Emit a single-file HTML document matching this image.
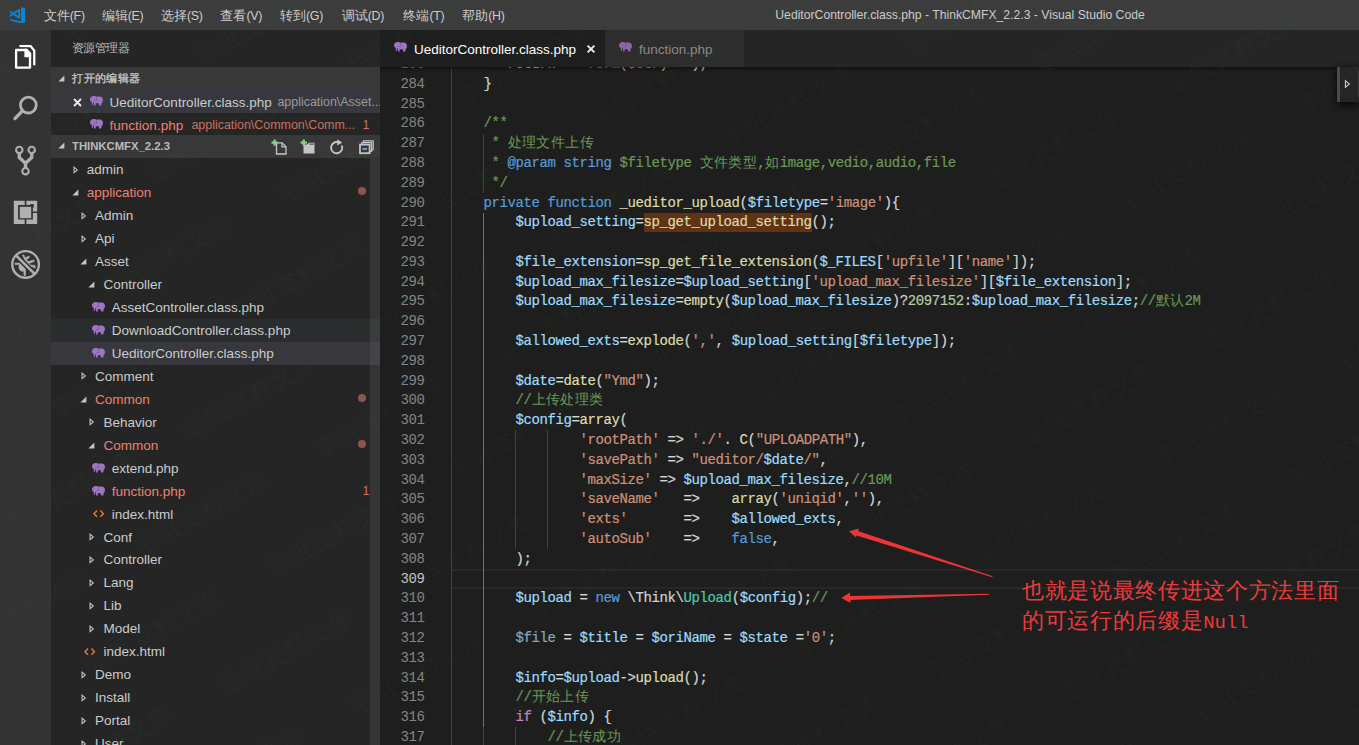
<!DOCTYPE html>
<html><head><meta charset="utf-8"><style>
*{margin:0;padding:0;box-sizing:border-box}
html,body{width:1359px;height:745px;overflow:hidden;background:#1e1e1e}
body{position:relative;font-family:"Liberation Sans",sans-serif}
div,svg{position:absolute}
#title{left:0;top:0;width:1359px;height:30px;background:#3c3c3c}
.menu{top:7.5px;height:17px;line-height:17px;font-size:12.5px;color:#cccccc;white-space:nowrap}
.mp{font-size:12.4px;letter-spacing:-0.3px}
.cj{display:inline-block;text-align:left;overflow:visible;white-space:nowrap}
.cjc{display:inline-block;text-align:left;white-space:nowrap;-webkit-text-stroke:0;font-weight:300;font-size:14.2px}
.cja{display:inline-block;text-align:left;white-space:nowrap}
#wtitle{left:775.3px;top:7px;height:17px;line-height:17px;font-size:12.2px;color:#cccccc;white-space:nowrap}
#act{left:0;top:30px;width:51px;height:715px;background:#333333}
#side{left:51px;top:30px;width:329px;height:715px;background:#252526}
.sbtitle{height:16px;line-height:16px;font-size:11.5px;color:#bbbbbb;white-space:nowrap}
.sechdr{left:51px;width:329px;background:#383838}
.sectxt{height:17px;line-height:17px;font-size:11.4px;font-weight:bold;color:#bbbbbb;white-space:nowrap}
.row{left:51px;width:329px}
.lbl{height:23px;line-height:23px;font-size:13.5px;white-space:nowrap}
.desc{height:23px;line-height:23px;font-size:12.45px;color:#9a9a9a;white-space:nowrap;overflow:hidden}
.dot{left:357.8px;width:8.4px;height:8.4px;border-radius:50%;background:#8c554d}
#sscroll{left:370px;top:158px;width:10px;height:587px;background:rgba(121,121,121,0.2)}
#tabs{left:380px;top:30px;width:979px;height:37px;background:#252526}
.tab{top:30px;height:37px}
.tabtxt{top:39.7px;height:20px;line-height:20px;font-size:13.5px;white-space:nowrap}
#editor{left:380px;top:67px;width:979px;height:678px;background:#1e1e1e;overflow:hidden}
.ln{left:0;width:44.4px;text-align:right;height:19.79px;line-height:19.79px;font-family:"Liberation Mono",monospace;font-size:14px;letter-spacing:-0.4px}
.cl{left:71.5px;height:19.79px;line-height:19.79px;font-family:"Liberation Mono",monospace;font-size:14px;letter-spacing:-0.4px;white-space:pre;-webkit-text-stroke:0.2px currentColor}
.guide{width:1px}
.curline{left:72px;width:907px;height:19.79px;border-top:2px solid #282828;border-bottom:2px solid #282828}
.anno{left:1022px;margin-top:-2px;font-weight:300;height:30px;line-height:30px;font-family:"Liberation Serif",serif;font-size:21.5px;color:#ee3a3a;white-space:nowrap}
</style></head><body>
<div id="title"></div>
<svg style="position:absolute;left:4px;top:2px" width="28" height="26" viewBox="0 0 28 26">
<path d="M17 4.9 L21.2 6.4 V20.6 L17.2 21.2 Z" fill="#0a84d6"/>
<path d="M5.6 16.9 Q9 17.1 17.3 19.3 L17.3 21.2 Q9.5 19.8 5.6 17.9 Z" fill="#0a84d6"/>
<path d="M15.2 8 V15.6 L8.9 11.8 Z" fill="none" stroke="#0a84d6" stroke-width="1.9" stroke-linejoin="round"/>
<path d="M8.9 11.8 L6.4 9.6 M8.9 11.8 L6.4 13.9" stroke="#0a84d6" stroke-width="1.8" stroke-linecap="round"/>
</svg>
<div class="menu" style="left:43.8px"><span class="cj" style="width:13px">文</span><span class="cj" style="width:13px">件</span><span class="mp">(F)</span></div>
<div class="menu" style="left:101.7px"><span class="cj" style="width:13px">编</span><span class="cj" style="width:13px">辑</span><span class="mp">(E)</span></div>
<div class="menu" style="left:161px"><span class="cj" style="width:13px">选</span><span class="cj" style="width:13px">择</span><span class="mp">(S)</span></div>
<div class="menu" style="left:220.4px"><span class="cj" style="width:13px">查</span><span class="cj" style="width:13px">看</span><span class="mp">(V)</span></div>
<div class="menu" style="left:280px"><span class="cj" style="width:13px">转</span><span class="cj" style="width:13px">到</span><span class="mp">(G)</span></div>
<div class="menu" style="left:341.7px"><span class="cj" style="width:13px">调</span><span class="cj" style="width:13px">试</span><span class="mp">(D)</span></div>
<div class="menu" style="left:403.4px"><span class="cj" style="width:13px">终</span><span class="cj" style="width:13px">端</span><span class="mp">(T)</span></div>
<div class="menu" style="left:462.2px"><span class="cj" style="width:13px">帮</span><span class="cj" style="width:13px">助</span><span class="mp">(H)</span></div>
<div id="wtitle">UeditorController.class.php - ThinkCMFX_2.2.3 - Visual Studio Code</div>
<div id="act"></div>
<svg style="position:absolute;left:10px;top:40px" width="30" height="32" viewBox="0 0 30 32">
<path d="M10.3 6 H20.6 L24.25 10.6 V24.4" fill="none" stroke="#fff" stroke-width="2.25" stroke-linecap="round" stroke-linejoin="miter"/>
<path d="M6.1 10 H16.6 L20 14 V27.7 H6.1 Z" fill="#333333" stroke="#333333" stroke-width="5"/>
<path d="M6.1 10 H16.6 L20 14 V27.7 H6.1 Z" fill="none" stroke="#fff" stroke-width="2.3" stroke-linejoin="round"/>
<path d="M14.4 8.85 H17 L21.15 13 V17.2 H14.4 Z" fill="#fff"/>
</svg>
<svg style="position:absolute;left:8px;top:90px" width="36" height="36" viewBox="0 0 36 36" fill="none" stroke="#b0b0b0" stroke-linecap="round">
<circle cx="20.35" cy="15.1" r="7.9" stroke-width="2.8"/>
<path d="M14.4 21 L6.9 28.6" stroke-width="3.3"/>
</svg>
<svg style="position:absolute;left:8px;top:140px" width="36" height="40" viewBox="0 0 36 40" fill="none" stroke="#b0b0b0">
<circle cx="11.3" cy="9.9" r="3.2" stroke-width="2.1"/><circle cx="23.7" cy="9.9" r="3.2" stroke-width="2.1"/><circle cx="17.5" cy="31.2" r="3.2" stroke-width="2.1"/>
<path d="M11.3 13 V17.6 L17.5 23.2 V28.2 M23.7 13 V17.6 L17.5 23.2" stroke-width="3.4" stroke-linejoin="miter"/>
</svg>
<svg style="position:absolute;left:8px;top:194px" width="36" height="36" viewBox="0 0 36 36" fill="#b0b0b0">
<path d="M5.8 6.8 H16.7 V11.1 H10.1 V25.6 H16.7 V30 H5.8 Z"/>
<path d="M18.4 6.8 H29.2 V17.6 H24.9 V11.1 H18.4 Z"/>
<path d="M18.4 19.1 H29.2 V30 H18.4 V25.6 H24.9 V19.1 Z"/>
<rect x="22.2" y="10.1" width="3.6" height="3.4" fill="#333333"/>
<rect x="11.8" y="12.8" width="11.4" height="11.4"/>
</svg>
<svg style="position:absolute;left:6px;top:244px" width="40" height="40" viewBox="0 0 40 40">
<g fill="#b0b0b0" stroke="#b0b0b0">
<path d="M16.5 11 L18 11 L19 14 L23 12 L23.5 13.2 L20.5 16 L22 17.5 L28 16 L28.3 17.3 L23 19.5 L24 21 L29 21.5 L29.2 24 L27.8 24 L27.6 22.8 L22 23 Z" stroke-width="0.6"/>
<path d="M9 19 L14 19 L15.5 17.5 L21 24 L19.5 25.5 L19.5 31.5 L18 31.5 L17.8 27.2 Q14 28 13 24 Q12.6 21.5 13.6 20.6 L9 20.6 Z" stroke-width="0.6"/>
</g>
<path d="M10.2 11.6 L28.6 29.9" stroke="#333333" stroke-width="5.6"/>
<path d="M10.2 11.6 L28.6 29.9" stroke="#b0b0b0" stroke-width="2.6"/>
<circle cx="19.6" cy="20.4" r="13.3" fill="none" stroke="#b0b0b0" stroke-width="2.4"/>
</svg>
<div id="side"></div>
<div class="sbtitle" style="left:71.6px;top:40px"><span class="cj" style="width:11.5px">资</span><span class="cj" style="width:11.5px">源</span><span class="cj" style="width:11.5px">管</span><span class="cj" style="width:11.5px">理</span><span class="cj" style="width:11.5px">器</span></div>
<div class="sechdr" style="top:67px;height:23px"></div>
<svg style="position:absolute;left:58.3px;top:74.6px" width="7" height="7" viewBox="0 0 7 7"><path d="M6.4 0.4 L6.4 6.4 L0.4 6.4 Z" fill="#c5c5c5"/></svg>
<div class="sectxt" style="left:72.3px;top:70px"><span class="cj" style="width:11.4px">打</span><span class="cj" style="width:11.4px">开</span><span class="cj" style="width:11.4px">的</span><span class="cj" style="width:11.4px">编</span><span class="cj" style="width:11.4px">辑</span><span class="cj" style="width:11.4px">器</span></div>
<div class="row" style="top:90px;height:23px;background:#37373d"></div>
<svg style="position:absolute;left:73px;top:97.5px" width="9" height="9" viewBox="0 0 9 9"><path d="M1 1 L8 8 M8 1 L1 8" stroke="#e8e8e8" stroke-width="1.9"/></svg>
<svg style="position:absolute;left:90px;top:96px" width="14" height="10" viewBox="0 0 14 10"><path d="M0 3.5 C0 1.3 1.5 0 3.6 0 C5 0 6 0.3 6.5 0.8 C7.2 0.6 8.2 0.5 9.5 0.5 C11.8 0.7 13 2 13 4 C13 5.3 12.5 6.3 11.8 6.8 L11.2 9.6 L9 9.6 L8.8 7.2 L5.8 7.2 L5.6 9.5 L4 9.5 L4 6.5 L3.3 6.3 L3 8.8 L1.8 8.8 L1.8 6 C0.6 5.4 0 4.6 0 3.5 Z" fill="#a074c4"/><path d="M6.6 1.4 V4.6 H4" fill="none" stroke="#6a4f88" stroke-width="0.55"/></svg>
<div class="lbl" style="left:109.6px;top:90.7px;color:#cccccc">UeditorController.class.php</div>
<div class="desc" style="left:277.4px;top:90.7px;width:103px">application\Asset...</div>
<svg style="position:absolute;left:90px;top:119px" width="14" height="10" viewBox="0 0 14 10"><path d="M0 3.5 C0 1.3 1.5 0 3.6 0 C5 0 6 0.3 6.5 0.8 C7.2 0.6 8.2 0.5 9.5 0.5 C11.8 0.7 13 2 13 4 C13 5.3 12.5 6.3 11.8 6.8 L11.2 9.6 L9 9.6 L8.8 7.2 L5.8 7.2 L5.6 9.5 L4 9.5 L4 6.5 L3.3 6.3 L3 8.8 L1.8 8.8 L1.8 6 C0.6 5.4 0 4.6 0 3.5 Z" fill="#a074c4"/><path d="M6.6 1.4 V4.6 H4" fill="none" stroke="#6a4f88" stroke-width="0.55"/></svg>
<div class="lbl" style="left:109.6px;top:113.7px;color:#f0806f">function.php</div>
<div class="desc" style="left:191.4px;top:113.7px;color:#c8705f">application\Common\Comm...</div>
<div class="lbl" style="left:362.6px;top:114px;color:#c87565;font-size:12.5px">1</div>
<div class="sechdr" style="top:135px;height:23px"></div>
<svg style="position:absolute;left:58.3px;top:142.2px" width="7" height="7" viewBox="0 0 7 7"><path d="M6.4 0.4 L6.4 6.4 L0.4 6.4 Z" fill="#c5c5c5"/></svg>
<div class="sectxt" style="left:72px;top:138px;font-size:11.3px">THINKCMFX_2.2.3</div>
<svg style="position:absolute;left:270px;top:138px" width="20" height="18" viewBox="0 0 20 18">
<path d="M6.5 4.8 H12 L16 8.8 V16 H6.5 Z" fill="none" stroke="#c5c5c5" stroke-width="1.3"/>
<path d="M12 4.8 V8.8 H16" fill="none" stroke="#c5c5c5" stroke-width="1.3"/>
<path d="M4.6 1.5 V7.8 M1.5 4.6 H7.8" stroke="#89d185" stroke-width="2.3"/>
</svg>
<svg style="position:absolute;left:299px;top:138px" width="20" height="18" viewBox="0 0 20 18">
<path d="M4.5 6.5 H8 L10 4.8 H15.5 V15.5 H4.5 Z" fill="#c5c5c5"/>
<path d="M10.5 5.6 H14.8 V6.6 H10.5 Z" fill="#383838"/>
<path d="M4.8 1.5 V7.8 M1.6 4.6 H8" stroke="#89d185" stroke-width="2.3"/>
</svg>
<svg style="position:absolute;left:329px;top:138px" width="17" height="18" viewBox="0 0 17 18">
<path d="M12.8 7.5 A5.6 5.6 0 1 1 9.2 4.3" fill="none" stroke="#c5c5c5" stroke-width="1.9"/>
<path d="M8.2 1.2 L13.2 4.4 L8.4 7.6 Z" fill="#c5c5c5"/>
</svg>
<svg style="position:absolute;left:358px;top:138px" width="17" height="18" viewBox="0 0 17 18">
<path d="M5.5 5.2 V2.8 H15.2 V11.6 H13" fill="none" stroke="#c5c5c5" stroke-width="1.2"/>
<path d="M3.8 6.6 V4.6 H13.6 V13.3 H11.6" fill="none" stroke="#c5c5c5" stroke-width="1.2"/>
<rect x="2" y="6.6" width="9.6" height="8.6" fill="none" stroke="#c5c5c5" stroke-width="1.8"/>
<rect x="4.6" y="10.2" width="4.4" height="1.5" fill="#75beff"/>
</svg>
<svg style="position:absolute;left:72.5px;top:165.9px" width="6" height="8" viewBox="0 0 6 8"><path d="M1.1 1.2 L4.3 3.9 L1.1 6.6 Z" fill="none" stroke="#c5c5c5" stroke-width="1.1" stroke-linejoin="miter"/></svg>
<div class="lbl" style="left:86.70px;top:158.30px;color:#cccccc">admin</div>
<svg style="position:absolute;left:71.5px;top:189.35px" width="7" height="7" viewBox="0 0 7 7"><path d="M6.4 0.4 L6.4 6.4 L0.4 6.4 Z" fill="#c5c5c5"/></svg>
<div class="lbl" style="left:86.70px;top:181.25px;color:#f0806f">application</div>
<div class="dot" style="top:187.05px"></div>
<svg style="position:absolute;left:80.87px;top:211.8px" width="6" height="8" viewBox="0 0 6 8"><path d="M1.1 1.2 L4.3 3.9 L1.1 6.6 Z" fill="none" stroke="#c5c5c5" stroke-width="1.1" stroke-linejoin="miter"/></svg>
<div class="lbl" style="left:95.07px;top:204.20px;color:#cccccc">Admin</div>
<svg style="position:absolute;left:80.87px;top:234.75px" width="6" height="8" viewBox="0 0 6 8"><path d="M1.1 1.2 L4.3 3.9 L1.1 6.6 Z" fill="none" stroke="#c5c5c5" stroke-width="1.1" stroke-linejoin="miter"/></svg>
<div class="lbl" style="left:95.07px;top:227.15px;color:#cccccc">Api</div>
<svg style="position:absolute;left:79.87px;top:258.2px" width="7" height="7" viewBox="0 0 7 7"><path d="M6.4 0.4 L6.4 6.4 L0.4 6.4 Z" fill="#c5c5c5"/></svg>
<div class="lbl" style="left:95.07px;top:250.10px;color:#cccccc">Asset</div>
<svg style="position:absolute;left:88.24px;top:281.15000000000003px" width="7" height="7" viewBox="0 0 7 7"><path d="M6.4 0.4 L6.4 6.4 L0.4 6.4 Z" fill="#c5c5c5"/></svg>
<div class="lbl" style="left:103.44px;top:273.05px;color:#cccccc">Controller</div>
<svg style="position:absolute;left:92.01px;top:301.9px" width="14" height="10" viewBox="0 0 14 10"><path d="M0 3.5 C0 1.3 1.5 0 3.6 0 C5 0 6 0.3 6.5 0.8 C7.2 0.6 8.2 0.5 9.5 0.5 C11.8 0.7 13 2 13 4 C13 5.3 12.5 6.3 11.8 6.8 L11.2 9.6 L9 9.6 L8.8 7.2 L5.8 7.2 L5.6 9.5 L4 9.5 L4 6.5 L3.3 6.3 L3 8.8 L1.8 8.8 L1.8 6 C0.6 5.4 0 4.6 0 3.5 Z" fill="#a074c4"/><path d="M6.6 1.4 V4.6 H4" fill="none" stroke="#6a4f88" stroke-width="0.55"/></svg>
<div class="lbl" style="left:111.81px;top:296.00px;color:#cccccc">AssetController.class.php</div>
<div class="row" style="top:318.75px;height:22.95px;background:#2a2d2e"></div>
<svg style="position:absolute;left:92.01px;top:324.85px" width="14" height="10" viewBox="0 0 14 10"><path d="M0 3.5 C0 1.3 1.5 0 3.6 0 C5 0 6 0.3 6.5 0.8 C7.2 0.6 8.2 0.5 9.5 0.5 C11.8 0.7 13 2 13 4 C13 5.3 12.5 6.3 11.8 6.8 L11.2 9.6 L9 9.6 L8.8 7.2 L5.8 7.2 L5.6 9.5 L4 9.5 L4 6.5 L3.3 6.3 L3 8.8 L1.8 8.8 L1.8 6 C0.6 5.4 0 4.6 0 3.5 Z" fill="#a074c4"/><path d="M6.6 1.4 V4.6 H4" fill="none" stroke="#6a4f88" stroke-width="0.55"/></svg>
<div class="lbl" style="left:111.81px;top:318.95px;color:#cccccc">DownloadController.class.php</div>
<div class="row" style="top:341.70px;height:22.95px;background:#37373d"></div>
<svg style="position:absolute;left:92.01px;top:347.8px" width="14" height="10" viewBox="0 0 14 10"><path d="M0 3.5 C0 1.3 1.5 0 3.6 0 C5 0 6 0.3 6.5 0.8 C7.2 0.6 8.2 0.5 9.5 0.5 C11.8 0.7 13 2 13 4 C13 5.3 12.5 6.3 11.8 6.8 L11.2 9.6 L9 9.6 L8.8 7.2 L5.8 7.2 L5.6 9.5 L4 9.5 L4 6.5 L3.3 6.3 L3 8.8 L1.8 8.8 L1.8 6 C0.6 5.4 0 4.6 0 3.5 Z" fill="#a074c4"/><path d="M6.6 1.4 V4.6 H4" fill="none" stroke="#6a4f88" stroke-width="0.55"/></svg>
<div class="lbl" style="left:111.81px;top:341.90px;color:#cccccc">UeditorController.class.php</div>
<svg style="position:absolute;left:80.87px;top:372.45px" width="6" height="8" viewBox="0 0 6 8"><path d="M1.1 1.2 L4.3 3.9 L1.1 6.6 Z" fill="none" stroke="#c5c5c5" stroke-width="1.1" stroke-linejoin="miter"/></svg>
<div class="lbl" style="left:95.07px;top:364.85px;color:#cccccc">Comment</div>
<svg style="position:absolute;left:79.87px;top:395.90000000000003px" width="7" height="7" viewBox="0 0 7 7"><path d="M6.4 0.4 L6.4 6.4 L0.4 6.4 Z" fill="#c5c5c5"/></svg>
<div class="lbl" style="left:95.07px;top:387.80px;color:#f0806f">Common</div>
<div class="dot" style="top:393.60px"></div>
<svg style="position:absolute;left:89.24px;top:418.34999999999997px" width="6" height="8" viewBox="0 0 6 8"><path d="M1.1 1.2 L4.3 3.9 L1.1 6.6 Z" fill="none" stroke="#c5c5c5" stroke-width="1.1" stroke-linejoin="miter"/></svg>
<div class="lbl" style="left:103.44px;top:410.75px;color:#cccccc">Behavior</div>
<svg style="position:absolute;left:88.24px;top:441.8px" width="7" height="7" viewBox="0 0 7 7"><path d="M6.4 0.4 L6.4 6.4 L0.4 6.4 Z" fill="#c5c5c5"/></svg>
<div class="lbl" style="left:103.44px;top:433.70px;color:#f0806f">Common</div>
<div class="dot" style="top:439.50px"></div>
<svg style="position:absolute;left:92.01px;top:462.54999999999995px" width="14" height="10" viewBox="0 0 14 10"><path d="M0 3.5 C0 1.3 1.5 0 3.6 0 C5 0 6 0.3 6.5 0.8 C7.2 0.6 8.2 0.5 9.5 0.5 C11.8 0.7 13 2 13 4 C13 5.3 12.5 6.3 11.8 6.8 L11.2 9.6 L9 9.6 L8.8 7.2 L5.8 7.2 L5.6 9.5 L4 9.5 L4 6.5 L3.3 6.3 L3 8.8 L1.8 8.8 L1.8 6 C0.6 5.4 0 4.6 0 3.5 Z" fill="#a074c4"/><path d="M6.6 1.4 V4.6 H4" fill="none" stroke="#6a4f88" stroke-width="0.55"/></svg>
<div class="lbl" style="left:111.81px;top:456.65px;color:#cccccc">extend.php</div>
<svg style="position:absolute;left:92.01px;top:485.5px" width="14" height="10" viewBox="0 0 14 10"><path d="M0 3.5 C0 1.3 1.5 0 3.6 0 C5 0 6 0.3 6.5 0.8 C7.2 0.6 8.2 0.5 9.5 0.5 C11.8 0.7 13 2 13 4 C13 5.3 12.5 6.3 11.8 6.8 L11.2 9.6 L9 9.6 L8.8 7.2 L5.8 7.2 L5.6 9.5 L4 9.5 L4 6.5 L3.3 6.3 L3 8.8 L1.8 8.8 L1.8 6 C0.6 5.4 0 4.6 0 3.5 Z" fill="#a074c4"/><path d="M6.6 1.4 V4.6 H4" fill="none" stroke="#6a4f88" stroke-width="0.55"/></svg>
<div class="lbl" style="left:111.81px;top:479.60px;color:#f0806f">function.php</div>
<div class="lbl" style="left:362.6px;top:480.40px;color:#c87565;font-size:12.5px">1</div>
<svg style="position:absolute;left:92.81px;top:510.15000000000003px" width="12" height="8" viewBox="0 0 12 8" fill="none" stroke="#e37933" stroke-width="1.45"><path d="M4 0.6 L1 3.7 L4 6.8 M7.4 0.6 L10.4 3.7 L7.4 6.8"/></svg>
<div class="lbl" style="left:111.81px;top:502.55px;color:#cccccc">index.html</div>
<svg style="position:absolute;left:89.24px;top:533.0999999999999px" width="6" height="8" viewBox="0 0 6 8"><path d="M1.1 1.2 L4.3 3.9 L1.1 6.6 Z" fill="none" stroke="#c5c5c5" stroke-width="1.1" stroke-linejoin="miter"/></svg>
<div class="lbl" style="left:103.44px;top:525.50px;color:#cccccc">Conf</div>
<svg style="position:absolute;left:89.24px;top:556.05px" width="6" height="8" viewBox="0 0 6 8"><path d="M1.1 1.2 L4.3 3.9 L1.1 6.6 Z" fill="none" stroke="#c5c5c5" stroke-width="1.1" stroke-linejoin="miter"/></svg>
<div class="lbl" style="left:103.44px;top:548.45px;color:#cccccc">Controller</div>
<svg style="position:absolute;left:89.24px;top:578.9999999999999px" width="6" height="8" viewBox="0 0 6 8"><path d="M1.1 1.2 L4.3 3.9 L1.1 6.6 Z" fill="none" stroke="#c5c5c5" stroke-width="1.1" stroke-linejoin="miter"/></svg>
<div class="lbl" style="left:103.44px;top:571.40px;color:#cccccc">Lang</div>
<svg style="position:absolute;left:89.24px;top:601.9499999999999px" width="6" height="8" viewBox="0 0 6 8"><path d="M1.1 1.2 L4.3 3.9 L1.1 6.6 Z" fill="none" stroke="#c5c5c5" stroke-width="1.1" stroke-linejoin="miter"/></svg>
<div class="lbl" style="left:103.44px;top:594.35px;color:#cccccc">Lib</div>
<svg style="position:absolute;left:89.24px;top:624.9px" width="6" height="8" viewBox="0 0 6 8"><path d="M1.1 1.2 L4.3 3.9 L1.1 6.6 Z" fill="none" stroke="#c5c5c5" stroke-width="1.1" stroke-linejoin="miter"/></svg>
<div class="lbl" style="left:103.44px;top:617.30px;color:#cccccc">Model</div>
<svg style="position:absolute;left:84.44px;top:647.8499999999999px" width="12" height="8" viewBox="0 0 12 8" fill="none" stroke="#e37933" stroke-width="1.45"><path d="M4 0.6 L1 3.7 L4 6.8 M7.4 0.6 L10.4 3.7 L7.4 6.8"/></svg>
<div class="lbl" style="left:103.44px;top:640.25px;color:#cccccc">index.html</div>
<svg style="position:absolute;left:80.87px;top:670.8px" width="6" height="8" viewBox="0 0 6 8"><path d="M1.1 1.2 L4.3 3.9 L1.1 6.6 Z" fill="none" stroke="#c5c5c5" stroke-width="1.1" stroke-linejoin="miter"/></svg>
<div class="lbl" style="left:95.07px;top:663.20px;color:#cccccc">Demo</div>
<svg style="position:absolute;left:80.87px;top:693.75px" width="6" height="8" viewBox="0 0 6 8"><path d="M1.1 1.2 L4.3 3.9 L1.1 6.6 Z" fill="none" stroke="#c5c5c5" stroke-width="1.1" stroke-linejoin="miter"/></svg>
<div class="lbl" style="left:95.07px;top:686.15px;color:#cccccc">Install</div>
<svg style="position:absolute;left:80.87px;top:716.6999999999999px" width="6" height="8" viewBox="0 0 6 8"><path d="M1.1 1.2 L4.3 3.9 L1.1 6.6 Z" fill="none" stroke="#c5c5c5" stroke-width="1.1" stroke-linejoin="miter"/></svg>
<div class="lbl" style="left:95.07px;top:709.10px;color:#cccccc">Portal</div>
<svg style="position:absolute;left:80.87px;top:739.65px" width="6" height="8" viewBox="0 0 6 8"><path d="M1.1 1.2 L4.3 3.9 L1.1 6.6 Z" fill="none" stroke="#c5c5c5" stroke-width="1.1" stroke-linejoin="miter"/></svg>
<div class="lbl" style="left:95.07px;top:732.05px;color:#cccccc">User</div>
<div id="sscroll"></div>
<div id="tabs"></div>
<div class="tab" style="left:380px;width:225px;background:#1e1e1e"></div>
<div class="tab" style="left:605px;width:138.5px;background:#2d2d2d"></div>
<svg style="position:absolute;left:394px;top:41.5px" width="14" height="10" viewBox="0 0 14 10"><path d="M0 3.5 C0 1.3 1.5 0 3.6 0 C5 0 6 0.3 6.5 0.8 C7.2 0.6 8.2 0.5 9.5 0.5 C11.8 0.7 13 2 13 4 C13 5.3 12.5 6.3 11.8 6.8 L11.2 9.6 L9 9.6 L8.8 7.2 L5.8 7.2 L5.6 9.5 L4 9.5 L4 6.5 L3.3 6.3 L3 8.8 L1.8 8.8 L1.8 6 C0.6 5.4 0 4.6 0 3.5 Z" fill="#a074c4"/><path d="M6.6 1.4 V4.6 H4" fill="none" stroke="#6a4f88" stroke-width="0.55"/></svg>
<div class="tabtxt" style="left:413.9px;color:#ffffff">UeditorController.class.php</div>
<svg style="position:absolute;left:586px;top:44px" width="10" height="10" viewBox="0 0 10 10"><path d="M1.6 1.6 L8.4 8.4 M8.4 1.6 L1.6 8.4" stroke="#e8e8e8" stroke-width="2"/></svg>
<svg style="position:absolute;left:619px;top:41.5px" width="14" height="10" viewBox="0 0 14 10"><path d="M0 3.5 C0 1.3 1.5 0 3.6 0 C5 0 6 0.3 6.5 0.8 C7.2 0.6 8.2 0.5 9.5 0.5 C11.8 0.7 13 2 13 4 C13 5.3 12.5 6.3 11.8 6.8 L11.2 9.6 L9 9.6 L8.8 7.2 L5.8 7.2 L5.6 9.5 L4 9.5 L4 6.5 L3.3 6.3 L3 8.8 L1.8 8.8 L1.8 6 C0.6 5.4 0 4.6 0 3.5 Z" fill="#8a66a8"/><path d="M6.6 1.4 V4.6 H4" fill="none" stroke="#6a4f88" stroke-width="0.55"/></svg>
<div class="tabtxt" style="left:639px;color:#8a8a8a">function.php</div>
<div id="editor">
<div class="curline" style="top:501.95px"></div>
<div style="position:absolute;left:263.50px;top:145.73px;width:168.00px;height:19px;background:#613214"></div>
<div class="guide" style="left:71.00px;top:-12.59px;height:20.09px;background:#404040"></div>
<div class="guide" style="left:71.00px;top:7.20px;height:20.09px;background:#404040"></div>
<div class="guide" style="left:71.00px;top:26.99px;height:20.09px;background:#404040"></div>
<div class="guide" style="left:71.00px;top:46.78px;height:20.09px;background:#404040"></div>
<div class="guide" style="left:71.00px;top:66.57px;height:20.09px;background:#404040"></div>
<div class="guide" style="left:103.00px;top:66.57px;height:20.09px;background:#404040"></div>
<div class="guide" style="left:71.00px;top:86.36px;height:20.09px;background:#404040"></div>
<div class="guide" style="left:103.00px;top:86.36px;height:20.09px;background:#404040"></div>
<div class="guide" style="left:71.00px;top:106.15px;height:20.09px;background:#404040"></div>
<div class="guide" style="left:103.00px;top:106.15px;height:20.09px;background:#404040"></div>
<div class="guide" style="left:71.00px;top:125.94px;height:20.09px;background:#404040"></div>
<div class="guide" style="left:71.00px;top:145.73px;height:20.09px;background:#404040"></div>
<div class="guide" style="left:103.00px;top:145.73px;height:20.09px;background:#707070"></div>
<div class="guide" style="left:71.00px;top:165.52px;height:20.09px;background:#404040"></div>
<div class="guide" style="left:103.00px;top:165.52px;height:20.09px;background:#707070"></div>
<div class="guide" style="left:71.00px;top:185.31px;height:20.09px;background:#404040"></div>
<div class="guide" style="left:103.00px;top:185.31px;height:20.09px;background:#707070"></div>
<div class="guide" style="left:71.00px;top:205.10px;height:20.09px;background:#404040"></div>
<div class="guide" style="left:103.00px;top:205.10px;height:20.09px;background:#707070"></div>
<div class="guide" style="left:71.00px;top:224.89px;height:20.09px;background:#404040"></div>
<div class="guide" style="left:103.00px;top:224.89px;height:20.09px;background:#707070"></div>
<div class="guide" style="left:71.00px;top:244.68px;height:20.09px;background:#404040"></div>
<div class="guide" style="left:103.00px;top:244.68px;height:20.09px;background:#707070"></div>
<div class="guide" style="left:71.00px;top:264.47px;height:20.09px;background:#404040"></div>
<div class="guide" style="left:103.00px;top:264.47px;height:20.09px;background:#707070"></div>
<div class="guide" style="left:71.00px;top:284.26px;height:20.09px;background:#404040"></div>
<div class="guide" style="left:103.00px;top:284.26px;height:20.09px;background:#707070"></div>
<div class="guide" style="left:71.00px;top:304.05px;height:20.09px;background:#404040"></div>
<div class="guide" style="left:103.00px;top:304.05px;height:20.09px;background:#707070"></div>
<div class="guide" style="left:71.00px;top:323.84px;height:20.09px;background:#404040"></div>
<div class="guide" style="left:103.00px;top:323.84px;height:20.09px;background:#707070"></div>
<div class="guide" style="left:71.00px;top:343.63px;height:20.09px;background:#404040"></div>
<div class="guide" style="left:103.00px;top:343.63px;height:20.09px;background:#707070"></div>
<div class="guide" style="left:71.00px;top:363.42px;height:20.09px;background:#404040"></div>
<div class="guide" style="left:103.00px;top:363.42px;height:20.09px;background:#707070"></div>
<div class="guide" style="left:135.00px;top:363.42px;height:20.09px;background:#404040"></div>
<div class="guide" style="left:167.00px;top:363.42px;height:20.09px;background:#404040"></div>
<div class="guide" style="left:71.00px;top:383.21px;height:20.09px;background:#404040"></div>
<div class="guide" style="left:103.00px;top:383.21px;height:20.09px;background:#707070"></div>
<div class="guide" style="left:135.00px;top:383.21px;height:20.09px;background:#404040"></div>
<div class="guide" style="left:167.00px;top:383.21px;height:20.09px;background:#404040"></div>
<div class="guide" style="left:71.00px;top:403.00px;height:20.09px;background:#404040"></div>
<div class="guide" style="left:103.00px;top:403.00px;height:20.09px;background:#707070"></div>
<div class="guide" style="left:135.00px;top:403.00px;height:20.09px;background:#404040"></div>
<div class="guide" style="left:167.00px;top:403.00px;height:20.09px;background:#404040"></div>
<div class="guide" style="left:71.00px;top:422.79px;height:20.09px;background:#404040"></div>
<div class="guide" style="left:103.00px;top:422.79px;height:20.09px;background:#707070"></div>
<div class="guide" style="left:135.00px;top:422.79px;height:20.09px;background:#404040"></div>
<div class="guide" style="left:167.00px;top:422.79px;height:20.09px;background:#404040"></div>
<div class="guide" style="left:71.00px;top:442.58px;height:20.09px;background:#404040"></div>
<div class="guide" style="left:103.00px;top:442.58px;height:20.09px;background:#707070"></div>
<div class="guide" style="left:135.00px;top:442.58px;height:20.09px;background:#404040"></div>
<div class="guide" style="left:167.00px;top:442.58px;height:20.09px;background:#404040"></div>
<div class="guide" style="left:71.00px;top:462.37px;height:20.09px;background:#404040"></div>
<div class="guide" style="left:103.00px;top:462.37px;height:20.09px;background:#707070"></div>
<div class="guide" style="left:135.00px;top:462.37px;height:20.09px;background:#404040"></div>
<div class="guide" style="left:167.00px;top:462.37px;height:20.09px;background:#404040"></div>
<div class="guide" style="left:71.00px;top:482.16px;height:20.09px;background:#404040"></div>
<div class="guide" style="left:103.00px;top:482.16px;height:20.09px;background:#707070"></div>
<div class="guide" style="left:71.00px;top:501.95px;height:20.09px;background:#404040"></div>
<div class="guide" style="left:103.00px;top:501.95px;height:20.09px;background:#707070"></div>
<div class="guide" style="left:71.00px;top:521.74px;height:20.09px;background:#404040"></div>
<div class="guide" style="left:103.00px;top:521.74px;height:20.09px;background:#707070"></div>
<div class="guide" style="left:71.00px;top:541.53px;height:20.09px;background:#404040"></div>
<div class="guide" style="left:103.00px;top:541.53px;height:20.09px;background:#707070"></div>
<div class="guide" style="left:71.00px;top:561.32px;height:20.09px;background:#404040"></div>
<div class="guide" style="left:103.00px;top:561.32px;height:20.09px;background:#707070"></div>
<div class="guide" style="left:71.00px;top:581.11px;height:20.09px;background:#404040"></div>
<div class="guide" style="left:103.00px;top:581.11px;height:20.09px;background:#707070"></div>
<div class="guide" style="left:71.00px;top:600.90px;height:20.09px;background:#404040"></div>
<div class="guide" style="left:103.00px;top:600.90px;height:20.09px;background:#707070"></div>
<div class="guide" style="left:71.00px;top:620.69px;height:20.09px;background:#404040"></div>
<div class="guide" style="left:103.00px;top:620.69px;height:20.09px;background:#707070"></div>
<div class="guide" style="left:71.00px;top:640.48px;height:20.09px;background:#404040"></div>
<div class="guide" style="left:103.00px;top:640.48px;height:20.09px;background:#707070"></div>
<div class="guide" style="left:71.00px;top:660.27px;height:20.09px;background:#404040"></div>
<div class="guide" style="left:103.00px;top:660.27px;height:20.09px;background:#404040"></div>
<div class="guide" style="left:135.00px;top:660.27px;height:20.09px;background:#404040"></div>
<div class="ln" style="top:-11.99px;color:#858585">283</div>
<div class="cl" style="top:-11.99px"><span style="color:#d4d4d4">       </span><span style="color:#d4d4d4">return</span><span style="color:#d4d4d4">  </span><span style="color:#ce9178">' form($str) '</span><span style="color:#d4d4d4"> );</span></div>
<div class="ln" style="top:7.80px;color:#858585">284</div>
<div class="cl" style="top:7.80px"><span style="color:#d4d4d4">    }</span></div>
<div class="ln" style="top:27.59px;color:#858585">285</div>
<div class="cl" style="top:27.59px"></div>
<div class="ln" style="top:47.38px;color:#858585">286</div>
<div class="cl" style="top:47.38px"><span style="color:#6a9955">    /**</span></div>
<div class="ln" style="top:67.17px;color:#858585">287</div>
<div class="cl" style="top:67.17px"><span style="color:#6a9955">     * <span class="cjc" style="width:14.45px">处</span><span class="cjc" style="width:14.45px">理</span><span class="cjc" style="width:14.45px">文</span><span class="cjc" style="width:14.45px">件</span><span class="cjc" style="width:14.45px">上</span><span class="cjc" style="width:14.45px">传</span></span></div>
<div class="ln" style="top:86.96px;color:#858585">288</div>
<div class="cl" style="top:86.96px"><span style="color:#6a9955">     * </span><span style="color:#569cd6">@param</span><span style="color:#6a9955"> </span><span style="color:#569cd6">string</span><span style="color:#6a9955"> </span><span style="color:#6a9955">$filetype <span class="cjc" style="width:14.45px">文</span><span class="cjc" style="width:14.45px">件</span><span class="cjc" style="width:14.45px">类</span><span class="cjc" style="width:14.45px">型</span>,<span class="cjc" style="width:14.45px">如</span>image,vedio,audio,file</span></div>
<div class="ln" style="top:106.75px;color:#858585">289</div>
<div class="cl" style="top:106.75px"><span style="color:#6a9955">     */</span></div>
<div class="ln" style="top:126.54px;color:#858585">290</div>
<div class="cl" style="top:126.54px"><span style="color:#d4d4d4">    </span><span style="color:#569cd6">private</span><span style="color:#d4d4d4"> </span><span style="color:#569cd6">function</span><span style="color:#d4d4d4"> </span><span style="color:#dcdcaa">_ueditor_upload</span><span style="color:#d4d4d4">(</span><span style="color:#9cdcfe">$filetype</span><span style="color:#d4d4d4">=</span><span style="color:#ce9178">'image'</span><span style="color:#d4d4d4">){</span></div>
<div class="ln" style="top:146.33px;color:#858585">291</div>
<div class="cl" style="top:146.33px"><span style="color:#d4d4d4">        </span><span style="color:#9cdcfe">$upload_setting</span><span style="color:#d4d4d4">=</span><span style="color:#dcdcaa">sp_get_upload_setting</span><span style="color:#d4d4d4">();</span></div>
<div class="ln" style="top:166.12px;color:#858585">292</div>
<div class="cl" style="top:166.12px"></div>
<div class="ln" style="top:185.91px;color:#858585">293</div>
<div class="cl" style="top:185.91px"><span style="color:#d4d4d4">        </span><span style="color:#9cdcfe">$file_extension</span><span style="color:#d4d4d4">=</span><span style="color:#dcdcaa">sp_get_file_extension</span><span style="color:#d4d4d4">(</span><span style="color:#9cdcfe">$_FILES</span><span style="color:#d4d4d4">[</span><span style="color:#ce9178">'upfile'</span><span style="color:#d4d4d4">][</span><span style="color:#ce9178">'name'</span><span style="color:#d4d4d4">]);</span></div>
<div class="ln" style="top:205.70px;color:#858585">294</div>
<div class="cl" style="top:205.70px"><span style="color:#d4d4d4">        </span><span style="color:#9cdcfe">$upload_max_filesize</span><span style="color:#d4d4d4">=</span><span style="color:#9cdcfe">$upload_setting</span><span style="color:#d4d4d4">[</span><span style="color:#ce9178">'upload_max_filesize'</span><span style="color:#d4d4d4">][</span><span style="color:#9cdcfe">$file_extension</span><span style="color:#d4d4d4">];</span></div>
<div class="ln" style="top:225.49px;color:#858585">295</div>
<div class="cl" style="top:225.49px"><span style="color:#d4d4d4">        </span><span style="color:#9cdcfe">$upload_max_filesize</span><span style="color:#d4d4d4">=</span><span style="color:#dcdcaa">empty</span><span style="color:#d4d4d4">(</span><span style="color:#9cdcfe">$upload_max_filesize</span><span style="color:#d4d4d4">)?</span><span style="color:#b5cea8">2097152</span><span style="color:#d4d4d4">:</span><span style="color:#9cdcfe">$upload_max_filesize</span><span style="color:#d4d4d4">;</span><span style="color:#6a9955">//<span class="cjc" style="width:14.45px">默</span><span class="cjc" style="width:14.45px">认</span>2M</span></div>
<div class="ln" style="top:245.28px;color:#858585">296</div>
<div class="cl" style="top:245.28px"></div>
<div class="ln" style="top:265.07px;color:#858585">297</div>
<div class="cl" style="top:265.07px"><span style="color:#d4d4d4">        </span><span style="color:#9cdcfe">$allowed_exts</span><span style="color:#d4d4d4">=</span><span style="color:#dcdcaa">explode</span><span style="color:#d4d4d4">(</span><span style="color:#ce9178">','</span><span style="color:#d4d4d4">, </span><span style="color:#9cdcfe">$upload_setting</span><span style="color:#d4d4d4">[</span><span style="color:#9cdcfe">$filetype</span><span style="color:#d4d4d4">]);</span></div>
<div class="ln" style="top:284.86px;color:#858585">298</div>
<div class="cl" style="top:284.86px"></div>
<div class="ln" style="top:304.65px;color:#858585">299</div>
<div class="cl" style="top:304.65px"><span style="color:#d4d4d4">        </span><span style="color:#9cdcfe">$date</span><span style="color:#d4d4d4">=</span><span style="color:#dcdcaa">date</span><span style="color:#d4d4d4">(</span><span style="color:#ce9178">"Ymd"</span><span style="color:#d4d4d4">);</span></div>
<div class="ln" style="top:324.44px;color:#858585">300</div>
<div class="cl" style="top:324.44px"><span style="color:#d4d4d4">        </span><span style="color:#6a9955">//<span class="cjc" style="width:14.45px">上</span><span class="cjc" style="width:14.45px">传</span><span class="cjc" style="width:14.45px">处</span><span class="cjc" style="width:14.45px">理</span><span class="cjc" style="width:14.45px">类</span></span></div>
<div class="ln" style="top:344.23px;color:#858585">301</div>
<div class="cl" style="top:344.23px"><span style="color:#d4d4d4">        </span><span style="color:#9cdcfe">$config</span><span style="color:#d4d4d4">=</span><span style="color:#dcdcaa">array</span><span style="color:#d4d4d4">(</span></div>
<div class="ln" style="top:364.02px;color:#858585">302</div>
<div class="cl" style="top:364.02px"><span style="color:#d4d4d4">                </span><span style="color:#ce9178">'rootPath'</span><span style="color:#d4d4d4"> =&gt; </span><span style="color:#ce9178">'./'</span><span style="color:#d4d4d4">. </span><span style="color:#dcdcaa">C</span><span style="color:#d4d4d4">(</span><span style="color:#ce9178">"UPLOADPATH"</span><span style="color:#d4d4d4">),</span></div>
<div class="ln" style="top:383.81px;color:#858585">303</div>
<div class="cl" style="top:383.81px"><span style="color:#d4d4d4">                </span><span style="color:#ce9178">'savePath'</span><span style="color:#d4d4d4"> =&gt; </span><span style="color:#ce9178">"ueditor/</span><span style="color:#9cdcfe">$date</span><span style="color:#ce9178">/"</span><span style="color:#d4d4d4">,</span></div>
<div class="ln" style="top:403.60px;color:#858585">304</div>
<div class="cl" style="top:403.60px"><span style="color:#d4d4d4">                </span><span style="color:#ce9178">'maxSize'</span><span style="color:#d4d4d4"> =&gt; </span><span style="color:#9cdcfe">$upload_max_filesize</span><span style="color:#d4d4d4">,</span><span style="color:#6a9955">//10M</span></div>
<div class="ln" style="top:423.39px;color:#858585">305</div>
<div class="cl" style="top:423.39px"><span style="color:#d4d4d4">                </span><span style="color:#ce9178">'saveName'</span><span style="color:#d4d4d4">   =&gt;    </span><span style="color:#dcdcaa">array</span><span style="color:#d4d4d4">(</span><span style="color:#ce9178">'uniqid'</span><span style="color:#d4d4d4">,</span><span style="color:#ce9178">''</span><span style="color:#d4d4d4">),</span></div>
<div class="ln" style="top:443.18px;color:#858585">306</div>
<div class="cl" style="top:443.18px"><span style="color:#d4d4d4">                </span><span style="color:#ce9178">'exts'</span><span style="color:#d4d4d4">       =&gt;    </span><span style="color:#9cdcfe">$allowed_exts</span><span style="color:#d4d4d4">,</span></div>
<div class="ln" style="top:462.97px;color:#858585">307</div>
<div class="cl" style="top:462.97px"><span style="color:#d4d4d4">                </span><span style="color:#ce9178">'autoSub'</span><span style="color:#d4d4d4">    =&gt;    </span><span style="color:#569cd6">false</span><span style="color:#d4d4d4">,</span></div>
<div class="ln" style="top:482.76px;color:#858585">308</div>
<div class="cl" style="top:482.76px"><span style="color:#d4d4d4">        );</span></div>
<div class="ln" style="top:502.55px;color:#c6c6c6">309</div>
<div class="cl" style="top:502.55px"></div>
<div class="ln" style="top:522.34px;color:#858585">310</div>
<div class="cl" style="top:522.34px"><span style="color:#d4d4d4">        </span><span style="color:#9cdcfe">$upload</span><span style="color:#d4d4d4"> = </span><span style="color:#569cd6">new</span><span style="color:#d4d4d4"> \</span><span style="color:#d4d4d4">Think</span><span style="color:#d4d4d4">\</span><span style="color:#4ec9b0">Upload</span><span style="color:#d4d4d4">(</span><span style="color:#9cdcfe">$config</span><span style="color:#d4d4d4">);</span><span style="color:#6a9955">//</span></div>
<div class="ln" style="top:542.13px;color:#858585">311</div>
<div class="cl" style="top:542.13px"></div>
<div class="ln" style="top:561.92px;color:#858585">312</div>
<div class="cl" style="top:561.92px"><span style="color:#d4d4d4">        </span><span style="color:#86a9bf">$file</span><span style="color:#d4d4d4"> = </span><span style="color:#9cdcfe">$title</span><span style="color:#d4d4d4"> = </span><span style="color:#9cdcfe">$oriName</span><span style="color:#d4d4d4"> = </span><span style="color:#9cdcfe">$state</span><span style="color:#d4d4d4"> =</span><span style="color:#ce9178">'0'</span><span style="color:#d4d4d4">;</span></div>
<div class="ln" style="top:581.71px;color:#858585">313</div>
<div class="cl" style="top:581.71px"></div>
<div class="ln" style="top:601.50px;color:#858585">314</div>
<div class="cl" style="top:601.50px"><span style="color:#d4d4d4">        </span><span style="color:#9cdcfe">$info</span><span style="color:#d4d4d4">=</span><span style="color:#9cdcfe">$upload</span><span style="color:#d4d4d4">-&gt;</span><span style="color:#dcdcaa">upload</span><span style="color:#d4d4d4">();</span></div>
<div class="ln" style="top:621.29px;color:#858585">315</div>
<div class="cl" style="top:621.29px"><span style="color:#d4d4d4">        </span><span style="color:#6a9955">//<span class="cjc" style="width:14.45px">开</span><span class="cjc" style="width:14.45px">始</span><span class="cjc" style="width:14.45px">上</span><span class="cjc" style="width:14.45px">传</span></span></div>
<div class="ln" style="top:641.08px;color:#858585">316</div>
<div class="cl" style="top:641.08px"><span style="color:#d4d4d4">        </span><span style="color:#c586c0">if</span><span style="color:#d4d4d4"> (</span><span style="color:#9cdcfe">$info</span><span style="color:#d4d4d4">) {</span></div>
<div class="ln" style="top:660.87px;color:#858585">317</div>
<div class="cl" style="top:660.87px"><span style="color:#d4d4d4">            </span><span style="color:#6a9955">//<span class="cjc" style="width:14.45px">上</span><span class="cjc" style="width:14.45px">传</span><span class="cjc" style="width:14.45px">成</span><span class="cjc" style="width:14.45px">功</span></span></div>
</div>
<div style="position:absolute;left:380px;top:67px;width:979px;height:5px;background:linear-gradient(rgba(0,0,0,0.42),rgba(0,0,0,0))"></div>
<div style="position:absolute;left:1337px;top:67px;width:22px;height:35px;background:#252526;box-shadow:0 2px 8px #000"></div>
<div style="position:absolute;left:1337px;top:67px;width:3px;height:35px;background:#4a4a4a"></div>
<svg style="position:absolute;left:1344px;top:79px" width="7" height="10" viewBox="0 0 7 10"><path d="M1.4 1.7 L5.3 5 L1.4 8.4 Z" fill="none" stroke="#d0d0d0" stroke-width="1.1"/></svg>
<div style="position:absolute;left:1358px;top:71px;width:1px;height:26px;background:#3c3c3c"></div>
<svg style="position:absolute;left:0;top:0" width="1359" height="745" viewBox="0 0 1359 745">
<path d="M856.5 530.5 L992.6 576.2 L992.3 577.2 L855 535 Z" fill="#ee3535"/>
<path d="M849 531.3 L859 528.5 L856 537.5 Z" fill="#ee3535"/>
<path d="M849 596 L989 593.8 L989 594.8 L849 600 Z" fill="#ee3535"/>
<path d="M841.3 597.9 L850 592.6 L850.6 603 Z" fill="#ee3535"/>
</svg>
<div class="anno" style="top:578px"><span class="cja" style="width:22.66px">也</span><span class="cja" style="width:22.66px">就</span><span class="cja" style="width:22.66px">是</span><span class="cja" style="width:22.66px">说</span><span class="cja" style="width:22.66px">最</span><span class="cja" style="width:22.66px">终</span><span class="cja" style="width:22.66px">传</span><span class="cja" style="width:22.66px">进</span><span class="cja" style="width:22.66px">这</span><span class="cja" style="width:22.66px">个</span><span class="cja" style="width:22.66px">方</span><span class="cja" style="width:22.66px">法</span><span class="cja" style="width:22.66px">里</span><span class="cja" style="width:22.66px">面</span></div>
<div class="anno" style="top:608px"><span class="cja" style="width:22.66px">的</span><span class="cja" style="width:22.66px">可</span><span class="cja" style="width:22.66px">运</span><span class="cja" style="width:22.66px">行</span><span class="cja" style="width:22.66px">的</span><span class="cja" style="width:22.66px">后</span><span class="cja" style="width:22.66px">缀</span><span class="cja" style="width:22.66px">是</span><span style="font-family:'Liberation Mono',monospace;font-size:18.9px">Null</span></div>
<svg style="position:absolute;left:0;top:0;pointer-events:none" width="1359" height="745" viewBox="0 0 1359 745"><g font-family="Liberation Sans, sans-serif" font-size="22" letter-spacing="3" font-weight="normal" fill="rgba(40,125,40,0.09)"><text x="-195.5" y="1.0" transform="rotate(-28.5 -195.5 1.0)">零组资料文库</text><text x="-63.5" y="22.0" transform="rotate(-28.5 -63.5 22.0)">零组资料文库</text><text x="-111.5" y="139.5" transform="rotate(-28.5 -111.5 139.5)">零组资料文库</text><text x="-159.5" y="257.0" transform="rotate(-28.5 -159.5 257.0)">零组资料文库</text><text x="68.5" y="43.0" transform="rotate(-28.5 68.5 43.0)">零组资料文库</text><text x="20.5" y="160.5" transform="rotate(-28.5 20.5 160.5)">零组资料文库</text><text x="-27.5" y="278.0" transform="rotate(-28.5 -27.5 278.0)">零组资料文库</text><text x="-75.5" y="395.5" transform="rotate(-28.5 -75.5 395.5)">零组资料文库</text><text x="-123.5" y="513.0" transform="rotate(-28.5 -123.5 513.0)">零组资料文库</text><text x="-171.5" y="630.5" transform="rotate(-28.5 -171.5 630.5)">零组资料文库</text><text x="200.5" y="64.0" transform="rotate(-28.5 200.5 64.0)">零组资料文库</text><text x="152.5" y="181.5" transform="rotate(-28.5 152.5 181.5)">零组资料文库</text><text x="104.5" y="299.0" transform="rotate(-28.5 104.5 299.0)">零组资料文库</text><text x="56.5" y="416.5" transform="rotate(-28.5 56.5 416.5)">零组资料文库</text><text x="8.5" y="534.0" transform="rotate(-28.5 8.5 534.0)">零组资料文库</text><text x="-39.5" y="651.5" transform="rotate(-28.5 -39.5 651.5)">零组资料文库</text><text x="-87.5" y="769.0" transform="rotate(-28.5 -87.5 769.0)">零组资料文库</text><text x="-135.5" y="886.5" transform="rotate(-28.5 -135.5 886.5)">零组资料文库</text><text x="332.5" y="85.0" transform="rotate(-28.5 332.5 85.0)">零组资料文库</text><text x="284.5" y="202.5" transform="rotate(-28.5 284.5 202.5)">零组资料文库</text><text x="236.5" y="320.0" transform="rotate(-28.5 236.5 320.0)">零组资料文库</text><text x="188.5" y="437.5" transform="rotate(-28.5 188.5 437.5)">零组资料文库</text><text x="140.5" y="555.0" transform="rotate(-28.5 140.5 555.0)">零组资料文库</text><text x="92.5" y="672.5" transform="rotate(-28.5 92.5 672.5)">零组资料文库</text><text x="44.5" y="790.0" transform="rotate(-28.5 44.5 790.0)">零组资料文库</text><text x="512.5" y="-11.5" transform="rotate(-28.5 512.5 -11.5)">零组资料文库</text><text x="464.5" y="106.0" transform="rotate(-28.5 464.5 106.0)">零组资料文库</text><text x="416.5" y="223.5" transform="rotate(-28.5 416.5 223.5)">零组资料文库</text><text x="368.5" y="341.0" transform="rotate(-28.5 368.5 341.0)">零组资料文库</text><text x="320.5" y="458.5" transform="rotate(-28.5 320.5 458.5)">零组资料文库</text><text x="272.5" y="576.0" transform="rotate(-28.5 272.5 576.0)">零组资料文库</text><text x="224.5" y="693.5" transform="rotate(-28.5 224.5 693.5)">零组资料文库</text><text x="176.5" y="811.0" transform="rotate(-28.5 176.5 811.0)">零组资料文库</text><text x="644.5" y="9.5" transform="rotate(-28.5 644.5 9.5)">零组资料文库</text><text x="596.5" y="127.0" transform="rotate(-28.5 596.5 127.0)">零组资料文库</text><text x="548.5" y="244.5" transform="rotate(-28.5 548.5 244.5)">零组资料文库</text><text x="500.5" y="362.0" transform="rotate(-28.5 500.5 362.0)">零组资料文库</text><text x="452.5" y="479.5" transform="rotate(-28.5 452.5 479.5)">零组资料文库</text><text x="404.5" y="597.0" transform="rotate(-28.5 404.5 597.0)">零组资料文库</text><text x="356.5" y="714.5" transform="rotate(-28.5 356.5 714.5)">零组资料文库</text><text x="308.5" y="832.0" transform="rotate(-28.5 308.5 832.0)">零组资料文库</text><text x="776.5" y="30.5" transform="rotate(-28.5 776.5 30.5)">零组资料文库</text><text x="728.5" y="148.0" transform="rotate(-28.5 728.5 148.0)">零组资料文库</text><text x="680.5" y="265.5" transform="rotate(-28.5 680.5 265.5)">零组资料文库</text><text x="632.5" y="383.0" transform="rotate(-28.5 632.5 383.0)">零组资料文库</text><text x="584.5" y="500.5" transform="rotate(-28.5 584.5 500.5)">零组资料文库</text><text x="536.5" y="618.0" transform="rotate(-28.5 536.5 618.0)">零组资料文库</text><text x="488.5" y="735.5" transform="rotate(-28.5 488.5 735.5)">零组资料文库</text><text x="440.5" y="853.0" transform="rotate(-28.5 440.5 853.0)">零组资料文库</text><text x="908.5" y="51.5" transform="rotate(-28.5 908.5 51.5)">零组资料文库</text><text x="860.5" y="169.0" transform="rotate(-28.5 860.5 169.0)">零组资料文库</text><text x="812.5" y="286.5" transform="rotate(-28.5 812.5 286.5)">零组资料文库</text><text x="764.5" y="404.0" transform="rotate(-28.5 764.5 404.0)">零组资料文库</text><text x="716.5" y="521.5" transform="rotate(-28.5 716.5 521.5)">零组资料文库</text><text x="668.5" y="639.0" transform="rotate(-28.5 668.5 639.0)">零组资料文库</text><text x="620.5" y="756.5" transform="rotate(-28.5 620.5 756.5)">零组资料文库</text><text x="572.5" y="874.0" transform="rotate(-28.5 572.5 874.0)">零组资料文库</text><text x="1040.5" y="72.5" transform="rotate(-28.5 1040.5 72.5)">零组资料文库</text><text x="992.5" y="190.0" transform="rotate(-28.5 992.5 190.0)">零组资料文库</text><text x="944.5" y="307.5" transform="rotate(-28.5 944.5 307.5)">零组资料文库</text><text x="896.5" y="425.0" transform="rotate(-28.5 896.5 425.0)">零组资料文库</text><text x="848.5" y="542.5" transform="rotate(-28.5 848.5 542.5)">零组资料文库</text><text x="800.5" y="660.0" transform="rotate(-28.5 800.5 660.0)">零组资料文库</text><text x="752.5" y="777.5" transform="rotate(-28.5 752.5 777.5)">零组资料文库</text><text x="704.5" y="895.0" transform="rotate(-28.5 704.5 895.0)">零组资料文库</text><text x="1172.5" y="93.5" transform="rotate(-28.5 1172.5 93.5)">零组资料文库</text><text x="1124.5" y="211.0" transform="rotate(-28.5 1124.5 211.0)">零组资料文库</text><text x="1076.5" y="328.5" transform="rotate(-28.5 1076.5 328.5)">零组资料文库</text><text x="1028.5" y="446.0" transform="rotate(-28.5 1028.5 446.0)">零组资料文库</text><text x="980.5" y="563.5" transform="rotate(-28.5 980.5 563.5)">零组资料文库</text><text x="932.5" y="681.0" transform="rotate(-28.5 932.5 681.0)">零组资料文库</text><text x="884.5" y="798.5" transform="rotate(-28.5 884.5 798.5)">零组资料文库</text><text x="1352.5" y="-3.0" transform="rotate(-28.5 1352.5 -3.0)">零组资料文库</text><text x="1304.5" y="114.5" transform="rotate(-28.5 1304.5 114.5)">零组资料文库</text><text x="1256.5" y="232.0" transform="rotate(-28.5 1256.5 232.0)">零组资料文库</text><text x="1208.5" y="349.5" transform="rotate(-28.5 1208.5 349.5)">零组资料文库</text><text x="1160.5" y="467.0" transform="rotate(-28.5 1160.5 467.0)">零组资料文库</text><text x="1112.5" y="584.5" transform="rotate(-28.5 1112.5 584.5)">零组资料文库</text><text x="1064.5" y="702.0" transform="rotate(-28.5 1064.5 702.0)">零组资料文库</text><text x="1016.5" y="819.5" transform="rotate(-28.5 1016.5 819.5)">零组资料文库</text><text x="1388.5" y="253.0" transform="rotate(-28.5 1388.5 253.0)">零组资料文库</text><text x="1340.5" y="370.5" transform="rotate(-28.5 1340.5 370.5)">零组资料文库</text><text x="1292.5" y="488.0" transform="rotate(-28.5 1292.5 488.0)">零组资料文库</text><text x="1244.5" y="605.5" transform="rotate(-28.5 1244.5 605.5)">零组资料文库</text><text x="1196.5" y="723.0" transform="rotate(-28.5 1196.5 723.0)">零组资料文库</text><text x="1148.5" y="840.5" transform="rotate(-28.5 1148.5 840.5)">零组资料文库</text><text x="1376.5" y="626.5" transform="rotate(-28.5 1376.5 626.5)">零组资料文库</text><text x="1328.5" y="744.0" transform="rotate(-28.5 1328.5 744.0)">零组资料文库</text><text x="1280.5" y="861.5" transform="rotate(-28.5 1280.5 861.5)">零组资料文库</text></g></svg>
</body></html>
